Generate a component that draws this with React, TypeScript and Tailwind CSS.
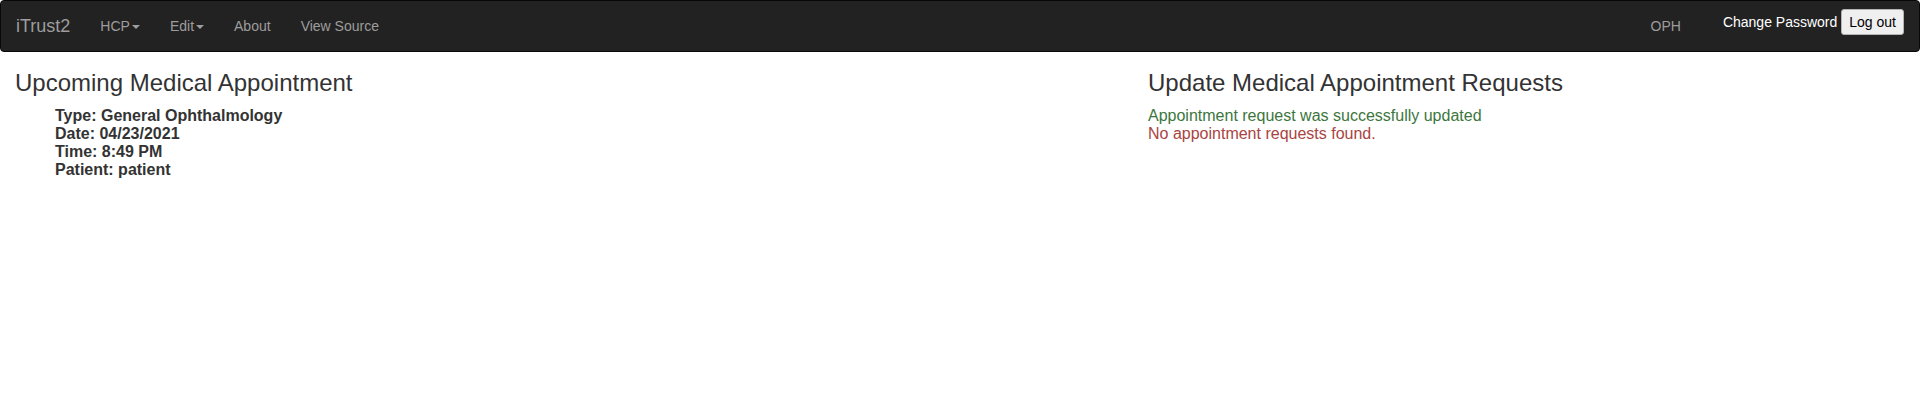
import React from "react";

const navLinks: { label: string; caret?: boolean }[] = [
  { label: "HCP", caret: true },
  { label: "Edit", caret: true },
  { label: "About" },
  { label: "View Source" },
];

const appointment = [
  "Type: General Ophthalmology",
  "Date: 04/23/2021",
  "Time: 8:49 PM",
  "Patient: patient",
];

const Caret = () => (
  <span className="ml-[2px] inline-block h-0 w-0 align-middle border-t-[4px] border-x-[4px] border-t-[#9d9d9d] border-x-transparent" />
);

const Navbar = () => (
  <nav className="flex h-[52px] rounded-[4px] border border-[#080808] bg-[#222222] pr-[15px] text-[14px] leading-[20px]">
    <a className="px-[15px] py-[15px] text-[18px] leading-[20px] text-[#9d9d9d]">
      iTrust2
    </a>
    {navLinks.map(({ label, caret }) => (
      <a key={label} className="px-[15px] py-[15px] text-[#9d9d9d] whitespace-nowrap">
        {label}
        {caret && <Caret />}
      </a>
    ))}
    <div className="ml-auto flex items-start">
      <a className="px-[15px] py-[15px] text-[#9d9d9d]">OPH</a>
      <div className="ml-[27px] mt-[8px] flex items-baseline gap-[4px]">
        <span className="text-white">Change Password</span>
        <button className="h-[26px] rounded-[3px] border border-[#b4b4b4] bg-[#efefef] px-[7px] text-[14px] leading-[24px] text-black">
          Log out
        </button>
      </div>
    </div>
  </nav>
);

const App = () => {
  return (
    <div
      className="min-h-[401px] bg-white text-[#333333]"
      style={{ fontFamily: '"Liberation Sans", Arial, sans-serif' }}
    >
      <Navbar />
      <div className="flex px-[15px]">
        <section className="w-[1133px] shrink-0">
          <h3 className="mt-[18px] mb-[11px] text-[24px] leading-[26.4px]">
            Upcoming Medical Appointment
          </h3>
          <ul className="pl-[40px] text-[16px] font-bold leading-[18px]">
            {appointment.map((line) => (
              <li key={line}>{line}</li>
            ))}
          </ul>
        </section>
        <section className="flex-1">
          <h3 className="mt-[18px] mb-[11px] text-[24px] leading-[26.4px]">
            Update Medical Appointment Requests
          </h3>
          <div className="text-[16px] leading-[18px]">
            <p className="text-[#3c763d]">Appointment request was successfully updated</p>
            <p className="text-[#a94442]">No appointment requests found.</p>
          </div>
        </section>
      </div>
    </div>
  );
};

export default App;
